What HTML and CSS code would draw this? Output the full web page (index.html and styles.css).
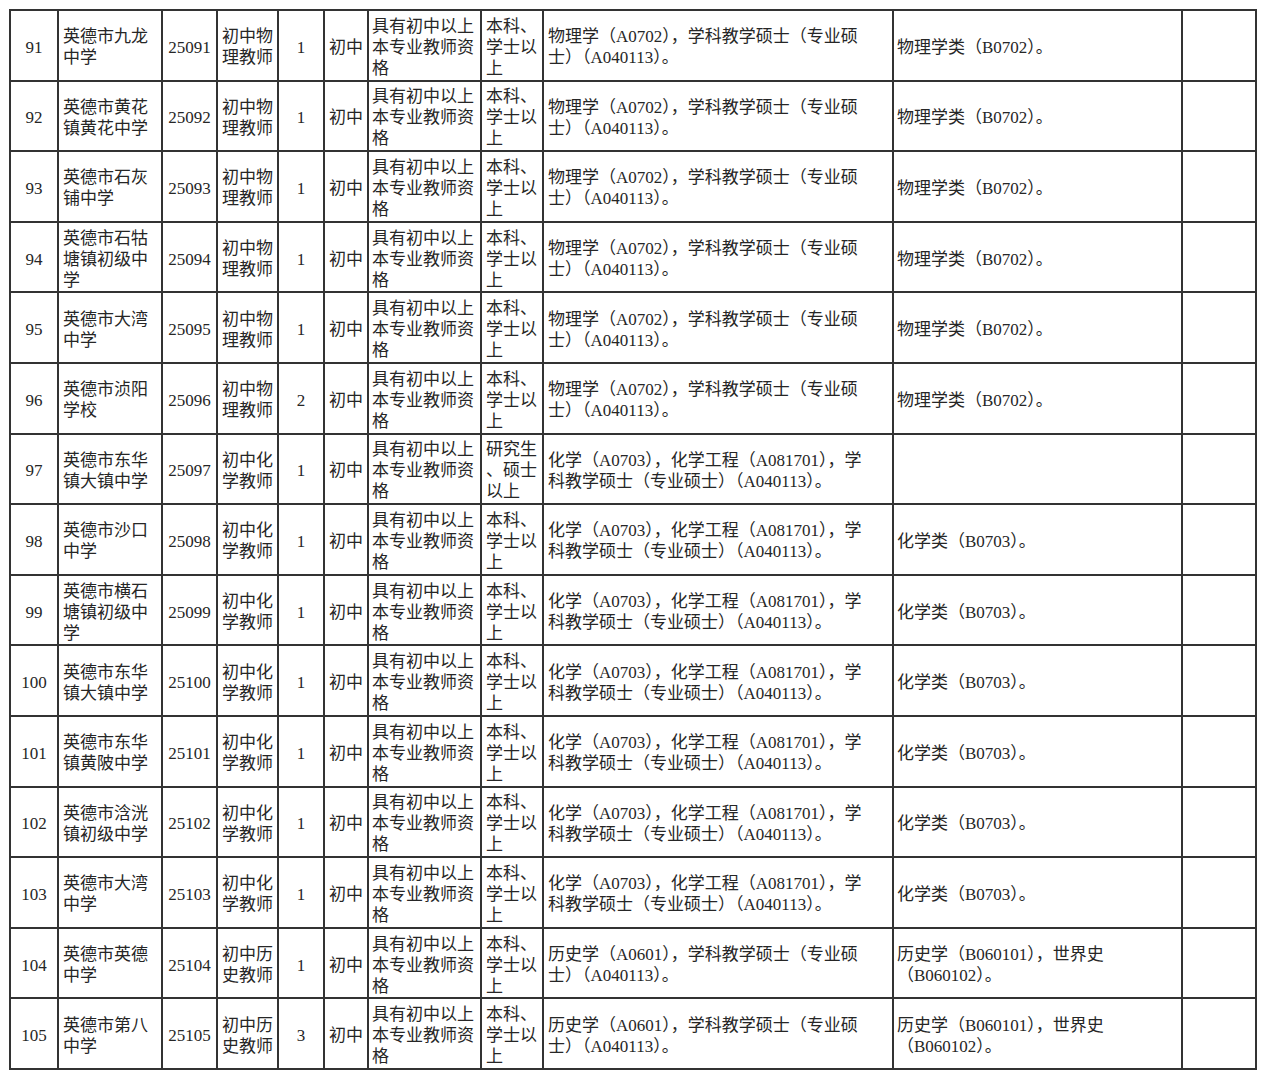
FILE: index.html
```html
<!DOCTYPE html>
<html lang="zh-CN">
<head>
<meta charset="utf-8">
<title>英德市招聘岗位表</title>
<link rel="stylesheet" href="styles.css">
</head>
<body>
<table class="jobs">
<tbody>
<tr><td class="c1">91</td><td class="c2">英德市九龙<br>中学</td><td class="c3">25091</td><td class="c4">初中物<br>理教师</td><td class="c5">1</td><td class="c6">初中</td><td class="c7">具有初中以上<br>本专业教师资<br>格</td><td class="c8">本科、<br>学士以<br>上</td><td class="c9">物理学（A0702），学科教学硕士（专业硕<br>士）（A040113）。</td><td class="c10">物理学类（B0702）。</td><td class="c11"></td></tr>
<tr><td class="c1">92</td><td class="c2">英德市黄花<br>镇黄花中学</td><td class="c3">25092</td><td class="c4">初中物<br>理教师</td><td class="c5">1</td><td class="c6">初中</td><td class="c7">具有初中以上<br>本专业教师资<br>格</td><td class="c8">本科、<br>学士以<br>上</td><td class="c9">物理学（A0702），学科教学硕士（专业硕<br>士）（A040113）。</td><td class="c10">物理学类（B0702）。</td><td class="c11"></td></tr>
<tr><td class="c1">93</td><td class="c2">英德市石灰<br>铺中学</td><td class="c3">25093</td><td class="c4">初中物<br>理教师</td><td class="c5">1</td><td class="c6">初中</td><td class="c7">具有初中以上<br>本专业教师资<br>格</td><td class="c8">本科、<br>学士以<br>上</td><td class="c9">物理学（A0702），学科教学硕士（专业硕<br>士）（A040113）。</td><td class="c10">物理学类（B0702）。</td><td class="c11"></td></tr>
<tr><td class="c1">94</td><td class="c2">英德市石牯<br>塘镇初级中<br>学</td><td class="c3">25094</td><td class="c4">初中物<br>理教师</td><td class="c5">1</td><td class="c6">初中</td><td class="c7">具有初中以上<br>本专业教师资<br>格</td><td class="c8">本科、<br>学士以<br>上</td><td class="c9">物理学（A0702），学科教学硕士（专业硕<br>士）（A040113）。</td><td class="c10">物理学类（B0702）。</td><td class="c11"></td></tr>
<tr><td class="c1">95</td><td class="c2">英德市大湾<br>中学</td><td class="c3">25095</td><td class="c4">初中物<br>理教师</td><td class="c5">1</td><td class="c6">初中</td><td class="c7">具有初中以上<br>本专业教师资<br>格</td><td class="c8">本科、<br>学士以<br>上</td><td class="c9">物理学（A0702），学科教学硕士（专业硕<br>士）（A040113）。</td><td class="c10">物理学类（B0702）。</td><td class="c11"></td></tr>
<tr><td class="c1">96</td><td class="c2">英德市浈阳<br>学校</td><td class="c3">25096</td><td class="c4">初中物<br>理教师</td><td class="c5">2</td><td class="c6">初中</td><td class="c7">具有初中以上<br>本专业教师资<br>格</td><td class="c8">本科、<br>学士以<br>上</td><td class="c9">物理学（A0702），学科教学硕士（专业硕<br>士）（A040113）。</td><td class="c10">物理学类（B0702）。</td><td class="c11"></td></tr>
<tr><td class="c1">97</td><td class="c2">英德市东华<br>镇大镇中学</td><td class="c3">25097</td><td class="c4">初中化<br>学教师</td><td class="c5">1</td><td class="c6">初中</td><td class="c7">具有初中以上<br>本专业教师资<br>格</td><td class="c8">研究生<br>、硕士<br>以上</td><td class="c9">化学（A0703），化学工程（A081701），学<br>科教学硕士（专业硕士）（A040113）。</td><td class="c10"></td><td class="c11"></td></tr>
<tr><td class="c1">98</td><td class="c2">英德市沙口<br>中学</td><td class="c3">25098</td><td class="c4">初中化<br>学教师</td><td class="c5">1</td><td class="c6">初中</td><td class="c7">具有初中以上<br>本专业教师资<br>格</td><td class="c8">本科、<br>学士以<br>上</td><td class="c9">化学（A0703），化学工程（A081701），学<br>科教学硕士（专业硕士）（A040113）。</td><td class="c10">化学类（B0703）。</td><td class="c11"></td></tr>
<tr><td class="c1">99</td><td class="c2">英德市横石<br>塘镇初级中<br>学</td><td class="c3">25099</td><td class="c4">初中化<br>学教师</td><td class="c5">1</td><td class="c6">初中</td><td class="c7">具有初中以上<br>本专业教师资<br>格</td><td class="c8">本科、<br>学士以<br>上</td><td class="c9">化学（A0703），化学工程（A081701），学<br>科教学硕士（专业硕士）（A040113）。</td><td class="c10">化学类（B0703）。</td><td class="c11"></td></tr>
<tr><td class="c1">100</td><td class="c2">英德市东华<br>镇大镇中学</td><td class="c3">25100</td><td class="c4">初中化<br>学教师</td><td class="c5">1</td><td class="c6">初中</td><td class="c7">具有初中以上<br>本专业教师资<br>格</td><td class="c8">本科、<br>学士以<br>上</td><td class="c9">化学（A0703），化学工程（A081701），学<br>科教学硕士（专业硕士）（A040113）。</td><td class="c10">化学类（B0703）。</td><td class="c11"></td></tr>
<tr><td class="c1">101</td><td class="c2">英德市东华<br>镇黄陂中学</td><td class="c3">25101</td><td class="c4">初中化<br>学教师</td><td class="c5">1</td><td class="c6">初中</td><td class="c7">具有初中以上<br>本专业教师资<br>格</td><td class="c8">本科、<br>学士以<br>上</td><td class="c9">化学（A0703），化学工程（A081701），学<br>科教学硕士（专业硕士）（A040113）。</td><td class="c10">化学类（B0703）。</td><td class="c11"></td></tr>
<tr><td class="c1">102</td><td class="c2">英德市浛洸<br>镇初级中学</td><td class="c3">25102</td><td class="c4">初中化<br>学教师</td><td class="c5">1</td><td class="c6">初中</td><td class="c7">具有初中以上<br>本专业教师资<br>格</td><td class="c8">本科、<br>学士以<br>上</td><td class="c9">化学（A0703），化学工程（A081701），学<br>科教学硕士（专业硕士）（A040113）。</td><td class="c10">化学类（B0703）。</td><td class="c11"></td></tr>
<tr><td class="c1">103</td><td class="c2">英德市大湾<br>中学</td><td class="c3">25103</td><td class="c4">初中化<br>学教师</td><td class="c5">1</td><td class="c6">初中</td><td class="c7">具有初中以上<br>本专业教师资<br>格</td><td class="c8">本科、<br>学士以<br>上</td><td class="c9">化学（A0703），化学工程（A081701），学<br>科教学硕士（专业硕士）（A040113）。</td><td class="c10">化学类（B0703）。</td><td class="c11"></td></tr>
<tr><td class="c1">104</td><td class="c2">英德市英德<br>中学</td><td class="c3">25104</td><td class="c4">初中历<br>史教师</td><td class="c5">1</td><td class="c6">初中</td><td class="c7">具有初中以上<br>本专业教师资<br>格</td><td class="c8">本科、<br>学士以<br>上</td><td class="c9">历史学（A0601），学科教学硕士（专业硕<br>士）（A040113）。</td><td class="c10">历史学（B060101），世界史<br>（B060102）。</td><td class="c11"></td></tr>
<tr><td class="c1">105</td><td class="c2">英德市第八<br>中学</td><td class="c3">25105</td><td class="c4">初中历<br>史教师</td><td class="c5">3</td><td class="c6">初中</td><td class="c7">具有初中以上<br>本专业教师资<br>格</td><td class="c8">本科、<br>学士以<br>上</td><td class="c9">历史学（A0601），学科教学硕士（专业硕<br>士）（A040113）。</td><td class="c10">历史学（B060101），世界史<br>（B060102）。</td><td class="c11"></td></tr>
</tbody>
</table>
</body>
</html>
```

FILE: styles.css
```css
html, body {
  margin: 0;
  padding: 0;
  background: #ffffff;
}

body {
  padding: 9px 0 0 9px;
  font-family: "Liberation Serif", "Noto Sans CJK SC", serif;
  font-size: 17px;
  line-height: 21px;
  color: #262626;
}

.jobs {
  table-layout: fixed;
  border-collapse: separate;
  border-spacing: 0;
  width: 1248px;
  border-top: 2px solid #333333;
  border-left: 2px solid #333333;
}

.jobs td {
  box-sizing: border-box;
  height: 70.6px;
  padding: 4px 3px 0 4px;
  border-right: 2px solid #333333;
  border-bottom: 2px solid #333333;
  vertical-align: middle;
  text-align: left;
  white-space: nowrap;
  overflow: hidden;
}

.jobs .c1 { width: 48px; text-align: center; padding-left: 0; padding-right: 0; }
.jobs .c2 { width: 104px; }
.jobs .c3 { width: 55px; text-align: center; padding-left: 0; padding-right: 0; }
.jobs .c4 { width: 61px; }
.jobs .c5 { width: 46px; text-align: center; padding-left: 0; padding-right: 0; }
.jobs .c6 { width: 44px; text-align: center; padding-left: 0; padding-right: 0; }
.jobs .c7 { width: 113px; padding-left: 3px; }
.jobs .c8 { width: 62px; }
.jobs .c9 { width: 350px; }
.jobs .c10 { width: 289px; padding-left: 3px; }
.jobs .c11 { width: 74px; }
```
